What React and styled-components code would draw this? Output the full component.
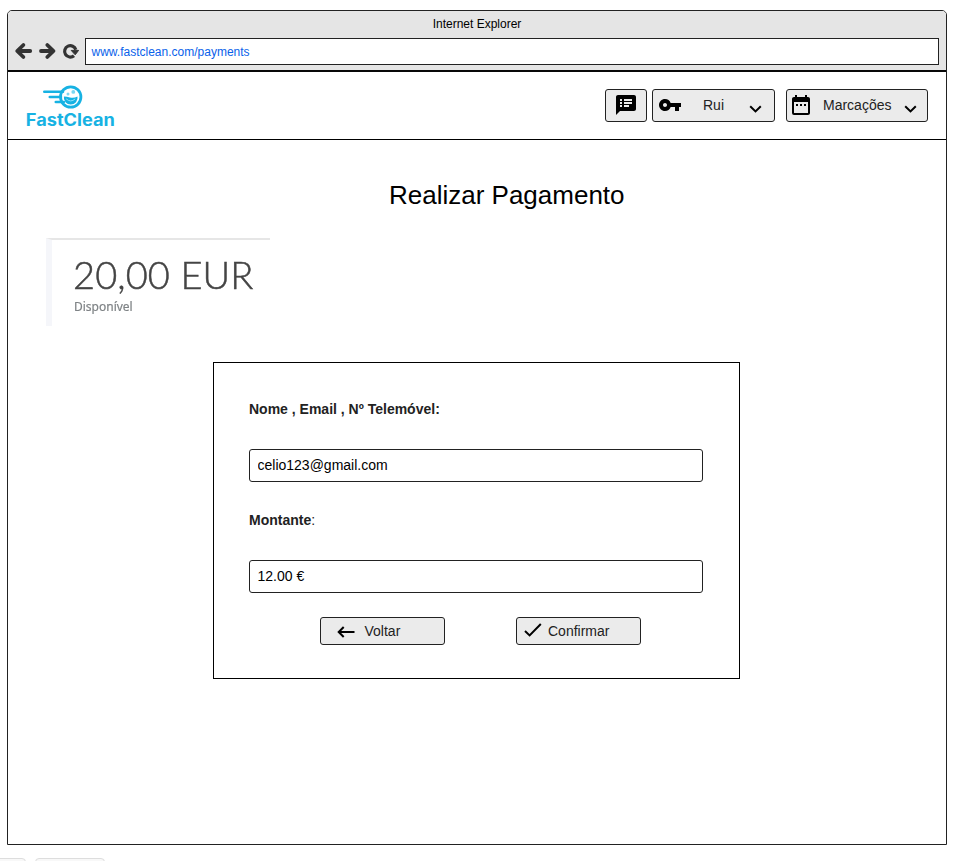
import React from "react";
import styled, { createGlobalStyle } from "styled-components";
import { MdSpeakerNotes, MdVpnKey, MdDateRange } from "react-icons/md";

const GlobalStyle = createGlobalStyle`
  * { box-sizing: border-box; }
  body {
    margin: 0;
    background: #fff;
    font-family: "Liberation Sans", Arial, sans-serif;
    overflow: hidden;
  }
  svg { display: block; flex: none; }
`;

const Page = styled.div`
  width: 963px;
  height: 861px;
  overflow: hidden;
  padding: 10px 0 0 7px;
`;

const BrowserWindow = styled.div`
  width: 940px;
  height: 835px;
  border: 1px solid #222;
  border-radius: 5px 5px 0 0;
  background: #fff;
`;

const Chrome = styled.div`
  height: 61px;
  background: #e5e5e5;
  border-bottom: 2px solid #080808;
  border-radius: 4px 4px 0 0;
`;

const WindowTitle = styled.div`
  height: 27px;
  line-height: 26px;
  font-size: 12px;
  text-align: center;
  color: #000;
`;

const AddressRow = styled.div`
  display: flex;
  align-items: center;
  padding: 0 7px 0 6px;
`;

const NavIcons = styled.div`
  width: 71px;
  padding-bottom: 1px;
`;

const AddressBar = styled.div`
  flex: 1;
  height: 27px;
  border: 1px solid #222;
  background: #fff;
  padding-left: 5.5px;
  line-height: 27px;
  font-size: 12px;
  color: #0a62ea;
`;

const Header = styled.header`
  height: 68px;
  display: flex;
  justify-content: space-between;
  padding: 17px 18px 0 17px;
  border-bottom: 1px solid #000;
`;

const Brand = styled.div`
  margin-top: -5px;
`;

const BrandName = styled.text`
  font-family: Inter, sans-serif;
  font-weight: 700;
  font-size: 17px;
`;

const HeaderActions = styled.div`
  display: flex;
`;

const Button = styled.button`
  display: flex;
  align-items: center;
  width: ${(p) => p.$width}px;
  height: ${(p) => p.$height}px;
  margin: 0 0 0 ${(p) => p.$gap || 0}px;
  padding: 0 0 0 ${(p) => p.$inset}px;
  border: 1px solid #222;
  border-radius: 3px;
  background: #ebebeb;
  color: #222;
  font-family: inherit;
  font-size: 14px;
`;

const ButtonLabel = styled.span`
  width: ${(p) => (p.$width ? `${p.$width}px` : "auto")};
  margin-left: ${(p) => p.$gap}px;
  padding-bottom: ${(p) => p.$lift || 0}px;
  line-height: 16px;
  text-align: left;
  white-space: nowrap;
`;

const IconSlot = styled.span`
  color: #000;
  padding-top: ${(p) => p.$drop || 0}px;
  padding-bottom: ${(p) => p.$lift || 0}px;
`;

const Title = styled.h1`
  margin: 40px 0 0 59.5px;
  height: 30px;
  line-height: 30px;
  font-size: 26px;
  font-weight: 400;
  text-align: center;
  color: #000;
`;

const Balance = styled.section`
  width: 224px;
  height: 88px;
  margin: 28px 0 0 38px;
  padding: 11px 0 0 22px;
  border-top: 2px solid #e6e6e6;
  border-left: 6px solid #f5f6fa;
`;

const Amount = styled.div`
  height: 46px;
  margin: 0 0 1px -1px;
  line-height: 46px;
  font-family: Lato, "Open Sans", sans-serif;
  font-weight: 300;
  font-size: 38px;
  letter-spacing: 0.1px;
  white-space: nowrap;
  color: #444;
  -webkit-text-stroke: 0.5px #444;
  filter: blur(0.4px);
`;

const AmountCaption = styled.div`
  height: 18px;
  line-height: 18px;
  font-family: "Noto Sans", sans-serif;
  font-size: 12px;
  color: #7f8386;
  -webkit-text-stroke: 0.2px #7f8386;
  filter: blur(0.4px);
`;

const PaymentForm = styled.section`
  width: 527px;
  height: 317px;
  margin: 36px 0 0 205px;
  padding: 38px 36px 0 35px;
  border: 1px solid #000;
`;

const Field = styled.label`
  display: block;
  height: 111px;
`;

const FieldLabel = styled.span`
  display: block;
  height: 16px;
  margin-bottom: 32px;
  line-height: 16px;
  font-size: 14px;
  color: #222;
`;

const Input = styled.input`
  display: block;
  width: 100%;
  height: 33px;
  padding: 0 8px 1px 7.5px;
  border: 1px solid #222;
  border-radius: 3px;
  background: #fff;
  font-family: inherit;
  font-size: 14px;
  color: #000;
`;

const FormActions = styled.div`
  display: flex;
  margin: -6px 0 0 71px;
`;

const TaskStrip = styled.div`
  display: flex;
  gap: 9px;
  margin: 13px 0 0 -15px;
`;

const TaskTab = styled.div`
  width: ${(p) => p.$width}px;
  height: 12px;
  border: 1px solid #ddd;
  border-radius: 4px;
  background: #f8f8f8;
`;

const BrowserIcons = () => (
  <svg width="71" height="20" viewBox="0 0 71 20" fill="none" stroke="#333" strokeLinejoin="round">
    <g strokeWidth="3.8" strokeLinecap="round">
      <path d="M16.2 10H4M9.4 4L3.2 10l6.2 6" />
      <path d="M27 10h12M33.3 4l6.2 6-6.2 6" />
    </g>
    <path d="M60 14.7A5.7 5.7 0 1 1 61.8 8.8" strokeWidth="3.2" />
    <path d="M57.2 9.4h7.4l-3.4 4.4z" fill="#333" strokeWidth="1" />
  </svg>
);

const Logo = () => (
  <svg width="92" height="46" viewBox="0 0 92 46" fill="none">
    <g stroke="#17b2e3" strokeWidth="2.6" strokeLinecap="round">
      <path d="M19.3 7.8H38M24.8 13H36M30.8 18h8" />
    </g>
    <circle cx="45.7" cy="13" r="10.2" stroke="#17b2e3" strokeWidth="2.8" />
    <path d="M38.9 12.6q3 .1 6 .9 4 1 7.6-1a6.9 6.9 0 1 1-13.6.1z" fill="#17b2e3" />
    <path d="M41.2 14.9q4.5 4 9 0" stroke="#8fe3fa" strokeWidth="1" />
    <circle cx="43" cy="10.1" r="1.5" fill="#7bd6f1" />
    <circle cx="48.3" cy="7.9" r="1.9" fill="#7bd6f1" />
    <BrandName x="0.8" y="41.8" fill="#17b2e3" textLength="89" lengthAdjust="spacingAndGlyphs">
      FastClean
    </BrandName>
  </svg>
);

const Chevron = () => (
  <svg width="13" height="8" viewBox="0 0 13 8" fill="none" stroke="#000" strokeWidth="2">
    <path d="M1.2 1.2L6.5 6.4l5.3-5.2" />
  </svg>
);

const BackArrow = () => (
  <svg width="18" height="12" viewBox="0 0 18 12" fill="none" stroke="#000" strokeWidth="2">
    <path d="M17.5 6H2M6.7 1L1.7 6l5 5" />
  </svg>
);

const Check = () => (
  <svg width="18" height="14" viewBox="0 0 18 14" fill="none" stroke="#000" strokeWidth="2">
    <path d="M1 8l4.6 4.4L16.8 1" />
  </svg>
);

export default function App() {
  return (
    <>
      <GlobalStyle />
      <Page>
        <BrowserWindow>
          <Chrome>
            <WindowTitle>Internet Explorer</WindowTitle>
            <AddressRow>
              <NavIcons><BrowserIcons /></NavIcons>
              <AddressBar>www.fastclean.com/payments</AddressBar>
            </AddressRow>
          </Chrome>
          <Header>
            <Brand><Logo /></Brand>
            <HeaderActions>
              <Button $width={42} $height={33} $inset={8}>
                <IconSlot $lift={1}><MdSpeakerNotes size={24} /></IconSlot>
              </Button>
              <Button $width={123} $height={33} $gap={5} $inset={5}>
                <IconSlot $lift={1}><MdVpnKey size={24} /></IconSlot>
                <ButtonLabel $gap={21} $width={46} $lift={2}>Rui</ButtonLabel>
                <IconSlot $drop={7}><Chevron /></IconSlot>
              </Button>
              <Button $width={142} $height={33} $gap={11} $inset={2}>
                <IconSlot $lift={1}><MdDateRange size={24} /></IconSlot>
                <ButtonLabel $gap={10} $width={81} $lift={2}>Marcações</ButtonLabel>
                <IconSlot $drop={7}><Chevron /></IconSlot>
              </Button>
            </HeaderActions>
          </Header>
          <Title>Realizar Pagamento</Title>
          <Balance>
            <Amount>20,00 EUR</Amount>
            <AmountCaption>Disponível</AmountCaption>
          </Balance>
          <PaymentForm>
            <Field>
              <FieldLabel><b>Nome , Email , Nº Telemóvel:</b></FieldLabel>
              <Input defaultValue="celio123@gmail.com" />
            </Field>
            <Field>
              <FieldLabel><b>Montante</b>:</FieldLabel>
              <Input defaultValue="12.00 €" />
            </Field>
            <FormActions>
              <Button $width={125} $height={28} $inset={16}>
                <IconSlot $drop={2}><BackArrow /></IconSlot>
                <ButtonLabel $gap={9.5}>Voltar</ButtonLabel>
              </Button>
              <Button $width={125} $height={28} $gap={71} $inset={7}>
                <IconSlot $lift={3}><Check /></IconSlot>
                <ButtonLabel $gap={6}>Confirmar</ButtonLabel>
              </Button>
            </FormActions>
          </PaymentForm>
        </BrowserWindow>
        <TaskStrip>
          <TaskTab $width={34} />
          <TaskTab $width={70} />
        </TaskStrip>
      </Page>
    </>
  );
}
